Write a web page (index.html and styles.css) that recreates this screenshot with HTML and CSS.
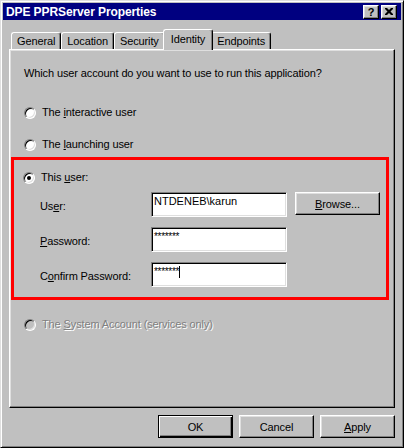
FILE: index.html
```html
<!DOCTYPE html>
<html lang="en">

<head>
    <meta charset="UTF-8">
    <meta name="viewport" content="width=device-width, initial-scale=1.0">
    <title>DPE PPRServer Properties</title>
    <link rel="stylesheet" href="styles.css">
</head>

<body>
    <div class='window'>
        <div class='titlebar'>
            <span class='title'>DPE PPRServer Properties</span>
            <div class='caption-buttons'>
                <span class='cap-btn'>?</span>
                <span class='cap-btn close'>
                    <svg width="8" height="7" viewBox="0 0 8 7">
                        <path d="M0 0h2l2 2 2-2h2v1l-2.5 2.5L8 6v1H6L4 5 2 7H0V6l2.5-2.5L0 1z" fill="#000" />
                    </svg>
                </span>
            </div>
        </div>

        <div class='dialog'>
            <div class='tabs'>
                <div class='tab'>General</div>
                <div class='tab'>Location</div>
                <div class='tab'>Security</div>
                <div class='tab active'>Identity</div>
                <div class='tab'>Endpoints</div>
            </div>

            <div class='panel'>
                <p class='question'>Which user account do you want to use to run this application?</p>

                <div class='radio-row first'>
                    <span class='radio'></span>
                    <span>The <u>i</u>nteractive user</span>
                </div>
                <div class='radio-row second'>
                    <span class='radio'></span>
                    <span>The <u>l</u>aunching user</span>
                </div>

                <div class='highlight'>
                    <div class='radio-row'>
                        <span class='radio checked'></span>
                        <span>This <u>u</u>ser:</span>
                    </div>

                    <div class='field-row user-row'>
                        <label class='field-label'>Us<u>e</u>r:</label>
                        <div class='field'>NTDENEB\karun</div>
                        <div class='button browse'><u>B</u>rowse...</div>
                    </div>
                    <div class='field-row'>
                        <label class='field-label'><u>P</u>assword:</label>
                        <div class='field masked'>*******</div>
                    </div>
                    <div class='field-row'>
                        <label class='field-label'>C<u>o</u>nfirm Password:</label>
                        <div class='field masked'>*******<span class='caret'></span></div>
                    </div>
                </div>

                <div class='radio-row disabled'>
                    <span class='radio'></span>
                    <span>The <u>S</u>ystem Account (services only)</span>
                </div>
            </div>

            <div class='actions'>
                <div class='button default'>OK</div>
                <div class='button'>Cancel</div>
                <div class='button'><u>A</u>pply</div>
            </div>
        </div>
    </div>
</body>

</html>
```

FILE: styles.css
```css
body {
    margin: 0;
    font-family: "Liberation Sans", Arial, sans-serif;
    font-size: 11px;
    letter-spacing: -0.12px;
    color: #000;
    background-color: #c0c0c0;
}

.window {
    box-sizing: border-box;
    width: 404px;
    height: 448px;
    padding: 2px;
    background-color: #c0c0c0;
    border: 1px solid;
    border-color: #dfdfdf #000 #000 #dfdfdf;
    box-shadow: inset 1px 1px #fff, inset -1px -1px #808080;
    display: flex;
    flex-direction: column;
}

/* title bar */
.titlebar {
    height: 17px;
    background-color: #000080;
    color: #fff;
    display: flex;
    align-items: center;
    justify-content: space-between;
    padding: 0 4px 0 3px;
}

.title {
    font-weight: bold;
    font-size: 12px;
    letter-spacing: -0.1px;
}

.caption-buttons {
    display: flex;
    gap: 2px;
}

.cap-btn {
    box-sizing: border-box;
    width: 16px;
    height: 14px;
    background-color: #c0c0c0;
    color: #000;
    font-weight: bold;
    font-size: 11px;
    line-height: 12px;
    display: flex;
    justify-content: center;
    align-items: center;
    border: 1px solid;
    border-color: #fff #000 #000 #fff;
    box-shadow: inset -1px -1px #808080, inset 1px 1px #dfdfdf;
}

/* dialog body */
.dialog {
    flex: 1;
    display: flex;
    flex-direction: column;
    padding: 9px 6px 7px 6px;
}

.tabs {
    height: 20px;
    display: flex;
    align-items: flex-end;
    padding-left: 2px;
    position: relative;
    z-index: 1;
}

.tab {
    box-sizing: border-box;
    height: 17px;
    padding: 1px 5px 0 5px;
    line-height: 14px;
    border: 1px solid #fff;
    border-bottom: none;
    border-right-color: #000;
    border-radius: 3px 3px 0 0;
    box-shadow: inset -1px 0 #808080;
    background-color: #c0c0c0;
}

.tab.active {
    height: 21px;
    margin: 0 -2px -1px -2px;
    padding: 2px 7px 0 7px;
    position: relative;
    z-index: 2;
}

.panel {
    box-sizing: border-box;
    height: 359px;
    padding: 17px 14px 0 14px;
    border: 1px solid;
    border-color: #fff #000 #000 #fff;
    box-shadow: inset -1px -1px #808080, inset 1px 1px #dfdfdf;
}

.question {
    margin: 0;
    line-height: 13px;
}

/* radios */
.radio-row {
    display: flex;
    align-items: center;
    gap: 6px;
    height: 13px;
    line-height: 13px;
}

.radio-row.first {
    margin-top: 26px;
}

.radio-row.second {
    margin-top: 19px;
}

.radio {
    box-sizing: border-box;
    width: 12px;
    height: 12px;
    border-radius: 50%;
    background-color: #fff;
    border: 1px solid;
    border-color: #808080 #fff #fff #808080;
    box-shadow: inset 1px 1px #000, inset -1px -1px #dfdfdf;
    display: flex;
    justify-content: center;
    align-items: center;
}

.radio.checked::after {
    content: "";
    width: 4px;
    height: 4px;
    border-radius: 50%;
    background-color: #000;
}

.radio-row.disabled {
    margin-top: 18px;
    color: #808080;
    text-shadow: 1px 1px #fff;
}

.radio-row.disabled .radio {
    background-color: #c0c0c0;
}

/* red annotation box */
.highlight {
    width: 378px;
    box-sizing: border-box;
    margin: 6px 0 0 -13px;
    padding: 11px 0 10px 9px;
    border: 3px solid #ff0000;
}

.field-row {
    display: flex;
    align-items: center;
    margin-top: 10px;
    padding-left: 17px;
}

.field-row.user-row {
    margin-top: 8px;
}

.field-label {
    width: 111px;
    padding-top: 2px;
}

.field {
    box-sizing: border-box;
    width: 136px;
    height: 25px;
    padding: 2px 2px 0 2px;
    line-height: 13px;
    background-color: #fff;
    border: 1px solid;
    border-color: #808080 #fff #fff #808080;
    box-shadow: inset 1px 1px #000, inset -1px -1px #dfdfdf;
    white-space: nowrap;
    display: flex;
    align-items: flex-start;
    letter-spacing: 0;
}

.field.masked {
    font-size: 10px;
    letter-spacing: -0.3px;
}

.caret {
    display: inline-block;
    width: 1px;
    height: 12px;
    margin-top: 1px;
    background-color: #000;
}

/* push buttons */
.button {
    box-sizing: border-box;
    width: 75px;
    height: 23px;
    display: flex;
    justify-content: center;
    align-items: center;
    background-color: #c0c0c0;
    border: 1px solid;
    border-color: #fff #000 #000 #fff;
    box-shadow: inset -1px -1px #808080, inset 1px 1px #dfdfdf;
}

.button.browse {
    width: 85px;
    margin-left: 8px;
    align-self: flex-start;
}

.button.default {
    border: 1px solid #000;
    box-shadow: inset 1px 1px #fff, inset -1px -1px #000, inset -2px -2px #808080;
}

.actions {
    display: flex;
    justify-content: flex-end;
    gap: 6px;
    margin-top: 7px;
}
```
